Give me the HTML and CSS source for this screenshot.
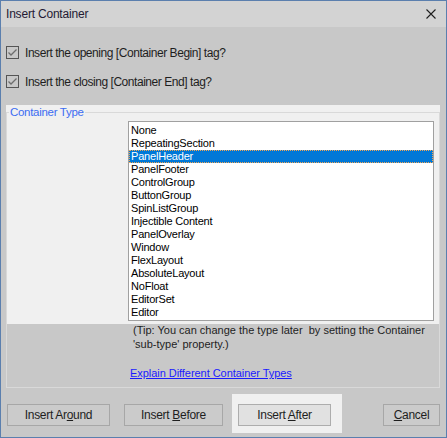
FILE: index.html
```html
<!DOCTYPE html>
<html lang="en">
<head>
    <meta charset="UTF-8">
    <title>Insert Container</title>
    <link rel="stylesheet" href="styles.css">
</head>
<body>
    <div class="dialog">
        <div class="titlebar">
            <span class="title">Insert Container</span>
            <svg class="close" width="10" height="10" viewBox="0 0 10 10">
                <path d="M0.5 0.5 L9.5 9.5 M9.5 0.5 L0.5 9.5" stroke="#1e1e1e" stroke-width="1.1" fill="none"/>
            </svg>
        </div>
        <div class="content">
            <label class="check">
                <span class="box"><svg width="11" height="11" viewBox="0 0 11 11"><path d="M1.5 5.5 L4 8 L9.5 2.5" stroke="#6e6e6e" stroke-width="1.3" fill="none"/></svg></span>
                Insert the opening [Container Begin] tag?
            </label>
            <label class="check">
                <span class="box"><svg width="11" height="11" viewBox="0 0 11 11"><path d="M1.5 5.5 L4 8 L9.5 2.5" stroke="#6e6e6e" stroke-width="1.3" fill="none"/></svg></span>
                Insert the closing [Container End] tag?
            </label>

            <div class="group">
                <div class="legend">Container Type</div>
                <ul class="listbox">
                    <li>None</li>
                    <li>RepeatingSection</li>
                    <li class="sel">PanelHeader</li>
                    <li>PanelFooter</li>
                    <li>ControlGroup</li>
                    <li>ButtonGroup</li>
                    <li>SpinListGroup</li>
                    <li>Injectible Content</li>
                    <li>PanelOverlay</li>
                    <li>Window</li>
                    <li>FlexLayout</li>
                    <li>AbsoluteLayout</li>
                    <li>NoFloat</li>
                    <li>EditorSet</li>
                    <li>Editor</li>
                </ul>
                <p class="tip">(Tip: You can change the type later&nbsp; by setting the Container<br>'sub-type' property.)</p>
                <a class="explain" href="#">Explain Different Container Types</a>
            </div>

            <div class="buttons">
                <button class="btn around">Insert Ar<u>o</u>und</button>
                <button class="btn before">Insert <u>B</u>efore</button>
                <span class="focus"><button class="btn after">Insert <u>A</u>fter</button></span>
                <button class="btn cancel"><u>C</u>ancel</button>
            </div>
        </div>
    </div>
</body>
</html>
```

FILE: styles.css
```css
body {
    margin: 0;
    font-family: "Liberation Sans", Arial, sans-serif;
}
.dialog {
    width: 447px;
    height: 438px;
    box-sizing: border-box;
    border: 1px solid #5b7fae;
    background: #c8c8c8;
    display: flex;
    flex-direction: column;
}
.titlebar {
    height: 26px;
    background: #d3d3d3;
    display: flex;
    align-items: center;
    justify-content: space-between;
    padding: 0 10px 0 5px;
}
.title {
    font-size: 12px;
    letter-spacing: -0.2px;
    color: #231a33;
}
.content {
    flex: 1;
    padding-top: 18px;
}
.check {
    display: flex;
    align-items: center;
    height: 15px;
    margin: 0 0 14px 5px;
    font-size: 12px;
    letter-spacing: -0.45px;
    color: #1e1e1e;
}
.box {
    width: 11px;
    height: 11px;
    border: 1px solid #555;
    margin-right: 6px;
    display: flex;
}
.group {
    width: 434px;
    box-sizing: border-box;
    margin: 23px 0 0 5px;
    padding-bottom: 7px;
    border: 1px solid #d9d9d9;
    background: linear-gradient(#f0f0f0 211px, transparent 211px);
    box-shadow: 0 -7px 0 #f0f0f0;
}
.legend {
    width: max-content;
    margin: -8px 0 0 2px;
    padding: 0 1px;
    background: #f0f0f0;
    color: #3c6cf2;
    font-size: 11.5px;
    letter-spacing: -0.3px;
    line-height: 14px;
}
.listbox {
    list-style: none;
    margin: 2px 0 0 121px;
    padding: 2px 0 1px 0;
    width: 306px;
    height: 200px;
    box-sizing: border-box;
    border: 1px solid #a0a0a0;
    background: #fff;
    overflow: hidden;
}
.listbox li {
    height: 13px;
    line-height: 13px;
    padding-left: 2px;
    font-size: 11px;
    letter-spacing: -0.2px;
    color: #000;
    white-space: nowrap;
}
.listbox li.sel {
    background: #0078d7;
    color: #fff;
    outline: 1px dotted #f2a654;
    outline-offset: -1px;
}
.tip {
    margin: 2px 0 0 126px;
    font-size: 11px;
    line-height: 14px;
    color: #1e1e1e;
}
.explain {
    display: block;
    width: max-content;
    margin: 15px 0 0 123px;
    font-size: 11px;
    line-height: 14px;
    letter-spacing: -0.05px;
    color: #1a1aff;
}
.buttons {
    display: flex;
    align-items: flex-start;
    margin: 16px 6px 0 6px;
}
.btn {
    height: 22px;
    padding: 0;
    border: 1px solid #a7a7a7;
    background: #cbcbcb;
    color: #1e1e1e;
    font-family: "Liberation Sans", Arial, sans-serif;
    font-size: 12px;
    letter-spacing: -0.3px;
}
.around {
    width: 103px;
}
.before {
    width: 99px;
    margin-left: 14px;
}
.focus {
    display: block;
    margin: -10px -11px 0 9px;
    padding: 10px 11px 7px 6px;
    background: #f0f0f0;
}
.after {
    display: block;
    width: 93px;
    background: #e1e1e1;
    border-color: #adadad;
}
.cancel {
    width: 57px;
    margin-left: auto;
}
```
